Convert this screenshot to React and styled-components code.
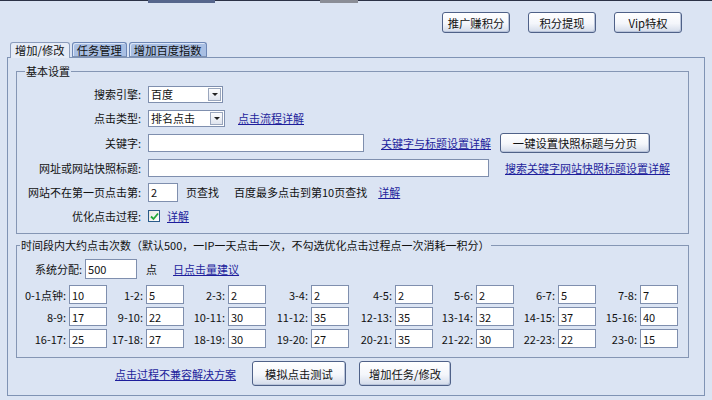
import React from "react";
import styled, { createGlobalStyle } from "styled-components";

const GlobalStyle = createGlobalStyle`
  body {
    margin: 0;
    background: #dbe4f3;
    font-family: "SimSun", "Noto Sans CJK SC", sans-serif;
    font-size: 11px;
    color: #111;
  }
`;

const HOURS = [
  ["0-1点钟:", "10"], ["1-2:", "5"], ["2-3:", "2"], ["3-4:", "2"],
  ["4-5:", "2"], ["5-6:", "2"], ["6-7:", "5"], ["7-8:", "7"],
  ["8-9:", "17"], ["9-10:", "22"], ["10-11:", "30"], ["11-12:", "35"],
  ["12-13:", "35"], ["13-14:", "32"], ["14-15:", "37"], ["15-16:", "40"],
  ["16-17:", "25"], ["17-18:", "27"], ["18-19:", "30"], ["19-20:", "27"],
  ["20-21:", "35"], ["21-22:", "30"], ["22-23:", "22"], ["23-0:", "15"],
];

const App = () => {
  return (
    <Page>
      <GlobalStyle />
      <TopEdge>
        <EdgePiece $left={148} $width={67} $color="#56668c" />
        <EdgePiece $left={105} $width={38} $color="#8a8d96" />
      </TopEdge>

      <TopBar>
        <Button $w={68} $h={21}>推广赚积分</Button>
        <Button $w={68} $h={21}>积分提现</Button>
        <Button $w={68} $h={21}>Vip特权</Button>
      </TopBar>

      <Tabs>
        <Tab $active>增加/修改</Tab>
        <Tab>任务管理</Tab>
        <Tab>增加百度指数</Tab>
      </Tabs>

      <Panel>
        <GroupBox>
          <Legend $indent={8}>基本设置</Legend>
          <Form>
            <Label>搜索引擎:</Label>
            <Cell>
              <FakeSelect $w={75}>
                <span>百度</span>
                <Arrow />
              </FakeSelect>
            </Cell>

            <Label>点击类型:</Label>
            <Cell>
              <FakeSelect $w={77}>
                <span>排名点击</span>
                <Arrow />
              </FakeSelect>
              <Link $ml={13}>点击流程详解</Link>
            </Cell>

            <Label>关键字:</Label>
            <Cell>
              <Input $w={216} $h={18} />
              <Link $ml={17}>关键字与标题设置详解</Link>
              <Button $w={150} $h={20} $ml={9}>一键设置快照标题与分页</Button>
            </Cell>

            <Label>网址或网站快照标题:</Label>
            <Cell>
              <Input $w={341} $h={18} />
              <Link $ml={16}>搜索关键字网站快照标题设置详解</Link>
            </Cell>

            <Label>网站不在第一页点击第:</Label>
            <Cell>
              <Input $w={30} $h={19} defaultValue="2" />
              <Text $ml={8}>页查找</Text>
              <Text $ml={15}>百度最多点击到第10页查找</Text>
              <Link $ml={11}>详解</Link>
            </Cell>

            <Label>优化点击过程:</Label>
            <Cell>
              <Check>
                <svg width="9" height="9" viewBox="0 0 9 9">
                  <path d="M1 4.5 L3.5 7 L8 1.5" fill="none" stroke="#22a83a" strokeWidth="1.8" />
                </svg>
              </Check>
              <Link $ml={7}>详解</Link>
            </Cell>
          </Form>
        </GroupBox>

        <GroupBox $second>
          <Legend $indent={1}>时间段内大约点击次数（默认500，一IP一天点击一次，不勾选优化点击过程点一次消耗一积分）</Legend>
          <AllotRow>
            <Text>系统分配:</Text>
            <Input $w={52} $h={20} $ml={3} defaultValue="500" />
            <Text $ml={9}>点</Text>
            <Link $ml={16}>日点击量建议</Link>
          </AllotRow>
          <TimeGrid>
            {HOURS.map(([label, value]) => (
              <React.Fragment key={label}>
                <HourLabel>{label}</HourLabel>
                <Input $w={38} $h={19} defaultValue={value} />
              </React.Fragment>
            ))}
          </TimeGrid>
        </GroupBox>

        <Footer>
          <Link>点击过程不兼容解决方案</Link>
          <Button $w={94} $h={25} $ml={16}>模拟点击测试</Button>
          <Button $w={92} $h={25} $ml={13}>增加任务/修改</Button>
        </Footer>
      </Panel>
    </Page>
  );
};

export default App;

const Page = styled.div`
  width: 712px;
  height: 400px;
  overflow: hidden;
`;

const TopEdge = styled.div`
  height: 3px;
  border-top: 1px solid #2c3246;
  display: flex;
  align-items: flex-start;
`;

const EdgePiece = styled.div`
  margin-left: ${(p) => p.$left}px;
  width: ${(p) => p.$width}px;
  height: 3px;
  margin-top: -1px;
  background: ${(p) => p.$color};
`;

const TopBar = styled.div`
  display: flex;
  justify-content: flex-end;
  gap: 18px;
  padding: 8px 30px 0 0;
`;

const Button = styled.button`
  width: ${(p) => p.$w}px;
  height: ${(p) => p.$h}px;
  margin-left: ${(p) => p.$ml || 0}px;
  padding: 0;
  font: inherit;
  font-size: 11.3px;
  color: #111;
  border: 1px solid #4f6188;
  border-radius: 3px;
  background: linear-gradient(#ffffff 0%, #f4f6fb 55%, #d3dbea 100%);
  box-shadow: inset -1px -1px 0 #b9c4da;
  flex: none;
`;

const Tabs = styled.div`
  display: flex;
  gap: 2px;
  padding-left: 10px;
  margin-top: 9px;
  margin-bottom: -1px;
`;

const Tab = styled.div`
  position: relative;
  z-index: 1;
  height: ${(p) => (p.$active ? 16 : 15)}px;
  padding: 0 4px;
  box-sizing: border-box;
  line-height: 15px;
  font-size: 11.3px;
  border: 1px solid ${(p) => (p.$active ? "#8b9cbb" : "#6d87b6")};
  border-bottom: ${(p) => (p.$active ? "none" : "1px solid #7f93b4")};
  border-radius: 3px 3px 0 0;
  background: ${(p) => (p.$active ? "#e6ecf7" : "#a9bfe3")};
  box-shadow: ${(p) => (p.$active ? "none" : "inset 1px 1px 0 #dbe5f6")};
  white-space: nowrap;
`;

const Panel = styled.div`
  margin-left: 7px;
  width: 698px;
  height: 339px;
  box-sizing: border-box;
  border: 1px solid #7f93b4;
  padding: 6px 15px 0 8px;
  background: #dbe4f3;
`;

const GroupBox = styled.fieldset`
  margin: ${(p) => (p.$second ? "4px 0 0" : "0")};
  padding: ${(p) => (p.$second ? "6px 0 9px 2px" : "4px 0 5px 0")};
  border: 1px solid #8596b4;
  min-width: 0;
`;

const Legend = styled.legend`
  margin-left: ${(p) => p.$indent}px;
  padding: 0 1px;
  line-height: 14px;
  white-space: nowrap;
`;

const Form = styled.div`
  display: grid;
  grid-template-columns: 124px 1fr;
  grid-template-rows: 24px 24px 26px 24px 24px 24px;
  column-gap: 7px;
`;

const Label = styled.div`
  display: flex;
  align-items: center;
  justify-content: flex-end;
  white-space: nowrap;
`;

const Cell = styled.div`
  display: flex;
  align-items: center;
  white-space: nowrap;
`;

const Text = styled.span`
  margin-left: ${(p) => p.$ml || 0}px;
  white-space: nowrap;
`;

const Link = styled.a`
  margin-left: ${(p) => p.$ml || 0}px;
  color: #1e1e9c;
  text-decoration: underline;
  white-space: nowrap;
  cursor: pointer;
`;

const Input = styled.input`
  width: ${(p) => p.$w}px;
  height: ${(p) => p.$h}px;
  margin-left: ${(p) => p.$ml || 0}px;
  box-sizing: border-box;
  border: 1px solid #7f8fae;
  background: #fff;
  padding: 0 2px;
  font: inherit;
  color: #111;
  outline: none;
  flex: none;
`;

const FakeSelect = styled.div`
  width: ${(p) => p.$w}px;
  height: 17px;
  box-sizing: border-box;
  border: 1px solid #7f8fae;
  background: #fff;
  display: flex;
  align-items: center;
  justify-content: space-between;
  padding-left: 2px;

  span {
    line-height: 15px;
  }
`;

const Arrow = styled.div`
  width: 13px;
  height: 13px;
  margin-right: 1px;
  box-sizing: border-box;
  border: 1px solid #9aa6bd;
  background: linear-gradient(#fdfdfe, #dfe4ee);
  display: flex;
  align-items: center;
  justify-content: center;

  &::after {
    content: "";
    border-left: 3px solid transparent;
    border-right: 3px solid transparent;
    border-top: 3px solid #222;
  }
`;

const Check = styled.span`
  width: 12px;
  height: 12px;
  box-sizing: border-box;
  border: 1px solid #2a5a8a;
  background: linear-gradient(135deg, #e6e6e0, #ffffff);
  display: inline-flex;
  align-items: center;
  justify-content: center;
`;

const AllotRow = styled.div`
  display: flex;
  align-items: center;
  height: 21px;
  padding-left: 16px;
`;

const TimeGrid = styled.div`
  display: grid;
  grid-template-columns: 50px 38px 39px 38px 44px 38px 45px 38px 46px 38px 43px 38px 44px 38px 44px 38px;
  grid-auto-rows: 19px;
  row-gap: 3px;
  margin-top: 6px;
`;

const HourLabel = styled.div`
  display: flex;
  align-items: center;
  justify-content: flex-end;
  padding-right: 3px;
  white-space: nowrap;
`;

const Footer = styled.div`
  display: flex;
  align-items: center;
  margin-top: 3px;
  padding-left: 99px;
`;
